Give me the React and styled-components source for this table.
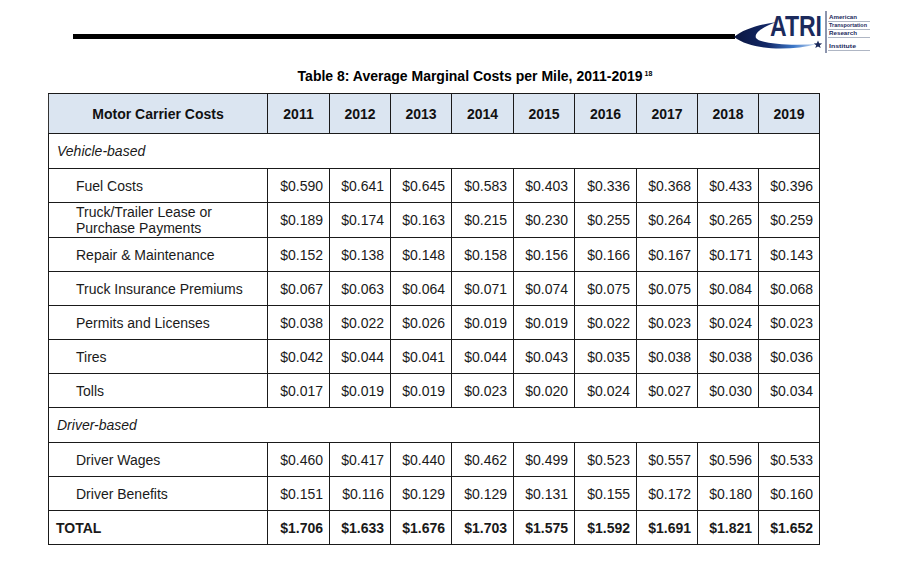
import styled, { createGlobalStyle } from "styled-components";

const GlobalStyle = createGlobalStyle`
  html, body {
    margin: 0;
    padding: 0;
    background: #ffffff;
  }
  body {
    font-family: "Liberation Sans", Arial, sans-serif;
    color: #1a1a1a;
  }
`;

const Page = styled.div`
  width: 920px;
  height: 569px;
  background: #fff;
  overflow: hidden;
`;

const TopBar = styled.div`
  display: flex;
  align-items: flex-start;
  height: 56px;
  padding-left: 73px;
`;

const Rule = styled.div`
  flex: 0 0 662px;
  height: 5px;
  margin-top: 34px;
  background: #000;
`;

const LogoBox = styled.div`
  flex: 0 0 145px;
  height: 52px;
  margin-top: 5px;
  margin-left: -2px;

  svg {
    overflow: visible;
  }
`;

const Title = styled.h2`
  margin: 12px 0 0;
  padding-left: 30px;
  text-align: center;
  font-size: 14px;
  line-height: 16px;
  font-weight: bold;
  color: #000;

  sup {
    font-size: 7px;
    line-height: 0;
    vertical-align: 5px;
    margin-left: 2px;
  }
`;

const Table = styled.table`
  margin: 9px 0 0 48px;
  width: 772px;
  table-layout: fixed;
  border-collapse: collapse;
  font-size: 14px;
  color: #1a1a1a;
`;

const HeadCell = styled.th`
  height: 39px;
  padding: 0;
  background: #dbe5f1;
  border: 1px solid #1a1a1a;
  border-left-color: #333;
  font-weight: bold;
  text-align: center;
  color: #111;
`;

const Row = styled.tr`
  height: ${({ $tall }) => ($tall ? "35px" : "34px")};
`;

const SectionCell = styled.td`
  padding: 0 0 0 8px;
  border: 1px solid #1a1a1a;
  font-style: italic;
  text-align: left;
`;

const LabelCell = styled.td`
  padding: 0 4px 0 ${({ $bold }) => ($bold ? "7px" : "27px")};
  border: 1px solid #1a1a1a;
  font-weight: ${({ $bold }) => ($bold ? "bold" : "normal")};
  line-height: 16px;
  text-align: left;
`;

const ValueCell = styled.td`
  padding: 0 6px 0 0;
  border: 1px solid #1a1a1a;
  border-left-color: #3a3a3a;
  font-weight: ${({ $bold }) => ($bold ? "bold" : "normal")};
  text-align: right;
  white-space: nowrap;
`;

const years = ["2011", "2012", "2013", "2014", "2015", "2016", "2017", "2018", "2019"];
const colWidths = [219, 62, 61, 61, 62, 61, 62, 61, 61, 61];

const sections = [
  {
    name: "Vehicle-based",
    rows: [
      ["Fuel Costs", ["0.590", "0.641", "0.645", "0.583", "0.403", "0.336", "0.368", "0.433", "0.396"]],
      ["Truck/Trailer Lease or Purchase Payments", ["0.189", "0.174", "0.163", "0.215", "0.230", "0.255", "0.264", "0.265", "0.259"], true],
      ["Repair & Maintenance", ["0.152", "0.138", "0.148", "0.158", "0.156", "0.166", "0.167", "0.171", "0.143"]],
      ["Truck Insurance Premiums", ["0.067", "0.063", "0.064", "0.071", "0.074", "0.075", "0.075", "0.084", "0.068"]],
      ["Permits and Licenses", ["0.038", "0.022", "0.026", "0.019", "0.019", "0.022", "0.023", "0.024", "0.023"]],
      ["Tires", ["0.042", "0.044", "0.041", "0.044", "0.043", "0.035", "0.038", "0.038", "0.036"]],
      ["Tolls", ["0.017", "0.019", "0.019", "0.023", "0.020", "0.024", "0.027", "0.030", "0.034"]],
    ],
  },
  {
    name: "Driver-based",
    rows: [
      ["Driver Wages", ["0.460", "0.417", "0.440", "0.462", "0.499", "0.523", "0.557", "0.596", "0.533"]],
      ["Driver Benefits", ["0.151", "0.116", "0.129", "0.129", "0.131", "0.155", "0.172", "0.180", "0.160"]],
    ],
  },
];

const totals = ["1.706", "1.633", "1.676", "1.703", "1.575", "1.592", "1.691", "1.821", "1.652"];

function AtriLogo() {
  const navy = "#1b2a5c";
  return (
    <svg width="145" height="52" viewBox="0 0 145 52">
      <defs>
        <linearGradient id="swoosh" x1="0" y1="0" x2="1" y2="0">
          <stop offset="0" stopColor="#0b1640" />
          <stop offset="0.4" stopColor="#122766" />
          <stop offset="0.72" stopColor="#3d78c9" />
          <stop offset="1" stopColor="#cfe0f5" />
        </linearGradient>
      </defs>
      <path
        d="M1 32 C 10 24, 28 19, 44 17 C 29 22, 21 28, 23 33 C 27 39, 58 41, 84 39 C 58 46, 20 46, 1 32 Z"
        fill="url(#swoosh)"
      />
      <text
        x="37"
        y="31"
        fontFamily="'Liberation Sans', Arial, sans-serif"
        fontWeight="bold"
        fontSize="29"
        fill={navy}
        textLength="52"
        lengthAdjust="spacingAndGlyphs"
      >
        ATRI
      </text>
      <line x1="93" y1="6" x2="93" y2="48" stroke={navy} strokeWidth="1" />
      <path
        d="M85 35.5 L86.2 38.3 L89.2 38.4 L86.8 40.2 L87.7 43.1 L85 41.4 L82.3 43.1 L83.2 40.2 L80.8 38.4 L83.8 38.3 Z"
        fill={navy}
      />
      {[
        ["American", 14, 28],
        ["Transportation", 22, 38],
        ["Research", 30, 28],
        ["Institute", 43, 27],
      ].map(([word, y, len]) => (
        <g key={word}>
          <text
            x="96"
            y={y}
            fontFamily="'Liberation Sans', Arial, sans-serif"
            fontWeight="bold"
            fontSize="5.5"
            fill={navy}
            textLength={len}
            lengthAdjust="spacingAndGlyphs"
          >
            {word}
          </text>
          <line x1="95" y1={y + 2.5} x2="137" y2={y + 2.5} stroke="#9aa3b5" strokeWidth="0.8" />
        </g>
      ))}
    </svg>
  );
}

export default function App() {
  return (
    <Page>
      <GlobalStyle />
      <TopBar>
        <Rule />
        <LogoBox>
          <AtriLogo />
        </LogoBox>
      </TopBar>

      <Title>
        Table 8: Average Marginal Costs per Mile, 2011-2019<sup>18</sup>
      </Title>

      <Table>
        <colgroup>
          {colWidths.map((w, i) => (
            <col key={i} style={{ width: w }} />
          ))}
        </colgroup>
        <thead>
          <tr>
            <HeadCell>Motor Carrier Costs</HeadCell>
            {years.map((y) => (
              <HeadCell key={y}>{y}</HeadCell>
            ))}
          </tr>
        </thead>
        <tbody>
          {sections.map((section) => [
            <Row key={section.name} $tall>
              <SectionCell colSpan={10}>{section.name}</SectionCell>
            </Row>,
            ...section.rows.map(([label, values, tall]) => (
              <Row key={label} $tall={tall}>
                <LabelCell>{label}</LabelCell>
                {values.map((v, i) => (
                  <ValueCell key={i}>${v}</ValueCell>
                ))}
              </Row>
            )),
          ])}
          <Row>
            <LabelCell $bold>TOTAL</LabelCell>
            {totals.map((v, i) => (
              <ValueCell key={i} $bold>
                ${v}
              </ValueCell>
            ))}
          </Row>
        </tbody>
      </Table>
    </Page>
  );
}
